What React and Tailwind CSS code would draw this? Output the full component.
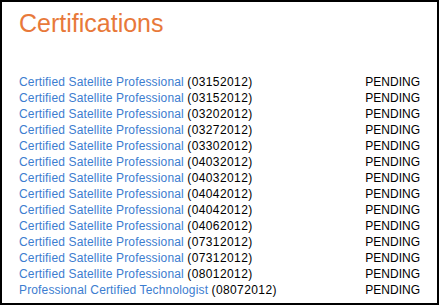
import React from "react";

const rows = [
  ["Certified Satellite Professional", "03152012"],
  ["Certified Satellite Professional", "03152012"],
  ["Certified Satellite Professional", "03202012"],
  ["Certified Satellite Professional", "03272012"],
  ["Certified Satellite Professional", "03302012"],
  ["Certified Satellite Professional", "04032012"],
  ["Certified Satellite Professional", "04032012"],
  ["Certified Satellite Professional", "04042012"],
  ["Certified Satellite Professional", "04042012"],
  ["Certified Satellite Professional", "04062012"],
  ["Certified Satellite Professional", "07312012"],
  ["Certified Satellite Professional", "07312012"],
  ["Certified Satellite Professional", "08012012"],
  ["Professional Certified Technologist", "08072012"],
];

export default function App() {
  return (
    <div
      className="w-[439px] h-[305px] border-2 border-black bg-white px-[17px] pt-[6px]"
      style={{ fontFamily: '"Liberation Sans", Arial, sans-serif' }}
    >
      <h1 className="text-[25px] leading-[30px] text-[#E8793A] font-normal">
        Certifications
      </h1>
      <div className="mt-[36px] flex flex-col">
        {rows.map(([name, date], i) => (
          <div key={i} className="flex justify-between text-[12px] leading-[16px] text-black">
            <span>
              <a className="text-[#3C7DD0] tracking-[0.15px]">{name}</a>{" "}
              <span className="tracking-[0.4px]">({date})</span>
            </span>
            <span>PENDING</span>
          </div>
        ))}
      </div>
    </div>
  );
}
